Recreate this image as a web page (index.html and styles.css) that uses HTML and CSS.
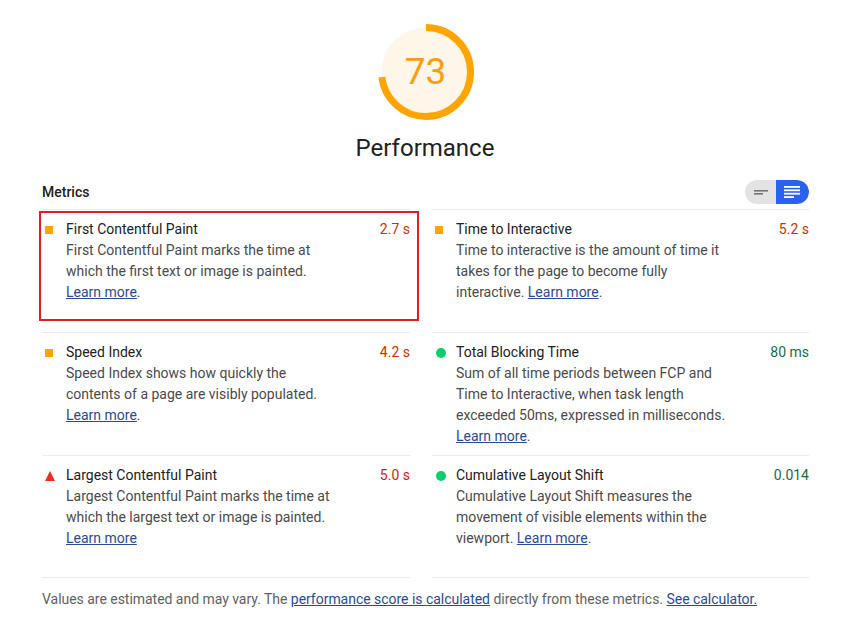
FILE: index.html
```html
<!DOCTYPE html>
<html lang="en">
<head>
    <meta charset="UTF-8">
    <meta name="viewport" content="width=device-width, initial-scale=1.0">
    <title>Performance</title>
    <link rel="stylesheet" href="styles.css">
</head>
<body>

    <div class="gauge">
        <svg class="gauge-ring" viewBox="0 0 96 96" width="96" height="96">
            <circle cx="48" cy="48" r="44.5" fill="#fff6ea" />
            <circle class="gauge-arc" cx="48" cy="48" r="44.5" fill="none"
                    stroke="#ffa400" stroke-width="7"
                    stroke-dasharray="204.1 279.6" transform="rotate(-90 48 48)" />
        </svg>
        <div class="gauge-score">73</div>
    </div>
    <div class="gauge-title">Performance</div>

    <div class="report">
        <div class="metrics-header">
            <span class="metrics-label">Metrics</span>
            <div class="toggle">
                <span class="toggle-part">
                    <svg viewBox="0 0 14 10" width="14" height="10">
                        <rect x="0" y="3" width="14" height="1.6" fill="#757575" />
                        <rect x="0" y="6" width="9" height="1.6" fill="#757575" />
                    </svg>
                </span>
                <span class="toggle-part active">
                    <svg viewBox="0 0 16 12" width="16" height="12">
                        <rect x="0" y="0" width="16" height="1.8" fill="#fff" />
                        <rect x="0" y="3.4" width="16" height="1.8" fill="#fff" />
                        <rect x="0" y="6.8" width="16" height="1.8" fill="#fff" />
                        <rect x="0" y="10.2" width="10" height="1.8" fill="#fff" />
                    </svg>
                </span>
            </div>
        </div>

        <div class="metrics">
            <div class="metric highlighted">
                <span class="icon square"></span>
                <div class="metric-body">
                    <div class="metric-head">
                        <span class="metric-title">First Contentful Paint</span>
                        <span class="metric-value average">2.7 s</span>
                    </div>
                    <p class="metric-desc">First Contentful Paint marks the time at which the first text or image is painted. <a href="#">Learn more</a>.</p>
                </div>
            </div>

            <div class="metric">
                <span class="icon square"></span>
                <div class="metric-body">
                    <div class="metric-head">
                        <span class="metric-title">Time to Interactive</span>
                        <span class="metric-value average">5.2 s</span>
                    </div>
                    <p class="metric-desc">Time to interactive is the amount of time it takes for the page to become fully interactive. <a href="#">Learn more</a>.</p>
                </div>
            </div>

            <div class="metric">
                <span class="icon square"></span>
                <div class="metric-body">
                    <div class="metric-head">
                        <span class="metric-title">Speed Index</span>
                        <span class="metric-value average">4.2 s</span>
                    </div>
                    <p class="metric-desc">Speed Index shows how quickly the contents of a page are visibly populated. <a href="#">Learn more</a>.</p>
                </div>
            </div>

            <div class="metric">
                <span class="icon circle"></span>
                <div class="metric-body">
                    <div class="metric-head">
                        <span class="metric-title">Total Blocking Time</span>
                        <span class="metric-value pass">80 ms</span>
                    </div>
                    <p class="metric-desc">Sum of all time periods between FCP and Time to Interactive, when task length exceeded 50ms, expressed in milliseconds. <a href="#">Learn more</a>.</p>
                </div>
            </div>

            <div class="metric">
                <span class="icon triangle"></span>
                <div class="metric-body">
                    <div class="metric-head">
                        <span class="metric-title">Largest Contentful Paint</span>
                        <span class="metric-value fail">5.0 s</span>
                    </div>
                    <p class="metric-desc">Largest Contentful Paint marks the time at which the largest text or image is painted. <a href="#">Learn more</a></p>
                </div>
            </div>

            <div class="metric">
                <span class="icon circle"></span>
                <div class="metric-body">
                    <div class="metric-head">
                        <span class="metric-title">Cumulative Layout Shift</span>
                        <span class="metric-value pass">0.014</span>
                    </div>
                    <p class="metric-desc">Cumulative Layout Shift measures the movement of visible elements within the viewport. <a href="#">Learn more</a>.</p>
                </div>
            </div>
        </div>

        <p class="footnote">Values are estimated and may vary. The <a href="#">performance score is calculated</a> directly from these metrics. <a href="#">See calculator.</a></p>
    </div>

</body>
</html>
```

FILE: styles.css
```css
body {
    font-family: Roboto, "Liberation Sans", Arial, sans-serif;
    background-color: #fff;
    color: #212121;
    margin: 0;
    font-size: 14px;
}
a {
    color: #2a4a94;
}
.gauge {
    position: relative;
    width: 96px;
    height: 96px;
    margin: 24px auto 0;
    padding-left: 6px;
}
.gauge-ring {
    display: block;
}
.gauge-score {
    position: absolute;
    top: 0;
    left: 6px;
    width: 96px;
    line-height: 96px;
    text-align: center;
    font-size: 37px;
    color: #f5a012;
}
.gauge-title {
    text-align: center;
    font-size: 24px;
    line-height: 30px;
    margin-top: 13px;
    padding-left: 5px;
    color: #212121;
}
.report {
    margin: 0 36px 0 42px;
}
.metrics-header {
    display: flex;
    justify-content: space-between;
    align-items: center;
    margin-top: 15px;
    height: 28px;
}
.metrics-label {
    font-weight: 500;
    font-size: 14px;
}
.toggle {
    display: flex;
    width: 64px;
    height: 24px;
    border-radius: 12px;
    overflow: hidden;
    background-color: #e3e3e3;
}
.toggle-part {
    flex: 1;
    display: flex;
    align-items: center;
    justify-content: center;
}
.toggle-part.active {
    background-color: #2962ec;
    border-radius: 0 12px 12px 0;
    padding-right: 2px;
}
.metrics {
    display: grid;
    grid-template-columns: 368px 377px;
    column-gap: 22px;
    margin-top: 3px;
}
.metric {
    position: relative;
    display: flex;
    border-top: 1px solid #ebebeb;
    min-height: 123px;
    box-sizing: border-box;
    padding-top: 9px;
}
.metric:nth-last-child(-n+2) {
    border-bottom: 1px solid #ebebeb;
    min-height: 123px;
}
.metric.highlighted::after {
    content: "";
    position: absolute;
    left: -3px;
    top: 1px;
    width: 376px;
    height: 106px;
    border: 2px solid #e02020;
}
.icon {
    flex: none;
}
.icon.square {
    width: 8px;
    height: 8px;
    margin: 7px 13px 0 3px;
    background-color: #ffa400;
}
.icon.circle {
    width: 10px;
    height: 10px;
    border-radius: 50%;
    background-color: #0cce6b;
    margin: 6px 10px 0 4px;
}
.icon.triangle {
    width: 0;
    height: 0;
    margin: 6px 11px 0 3px;
    border-left: 5.5px solid transparent;
    border-right: 5.5px solid transparent;
    border-bottom: 10px solid #eb2f26;
}
.metric-body {
    flex: 1;
}
.metric-head {
    display: flex;
    justify-content: space-between;
    line-height: 21px;
}
.metric-title {
    color: #212121;
}
.metric-value.average {
    color: #c33300;
}
.metric-value.fail {
    color: #d81b0f;
}
.metric-value.pass {
    color: #1b6b3c;
}
.metric-desc {
    margin: 0;
    line-height: 21px;
    color: #4a4a4a;
    max-width: 270px;
}
.footnote {
    margin: 11px 0 0;
    color: #616161;
    line-height: 21px;
    letter-spacing: -0.03px;
}
```
